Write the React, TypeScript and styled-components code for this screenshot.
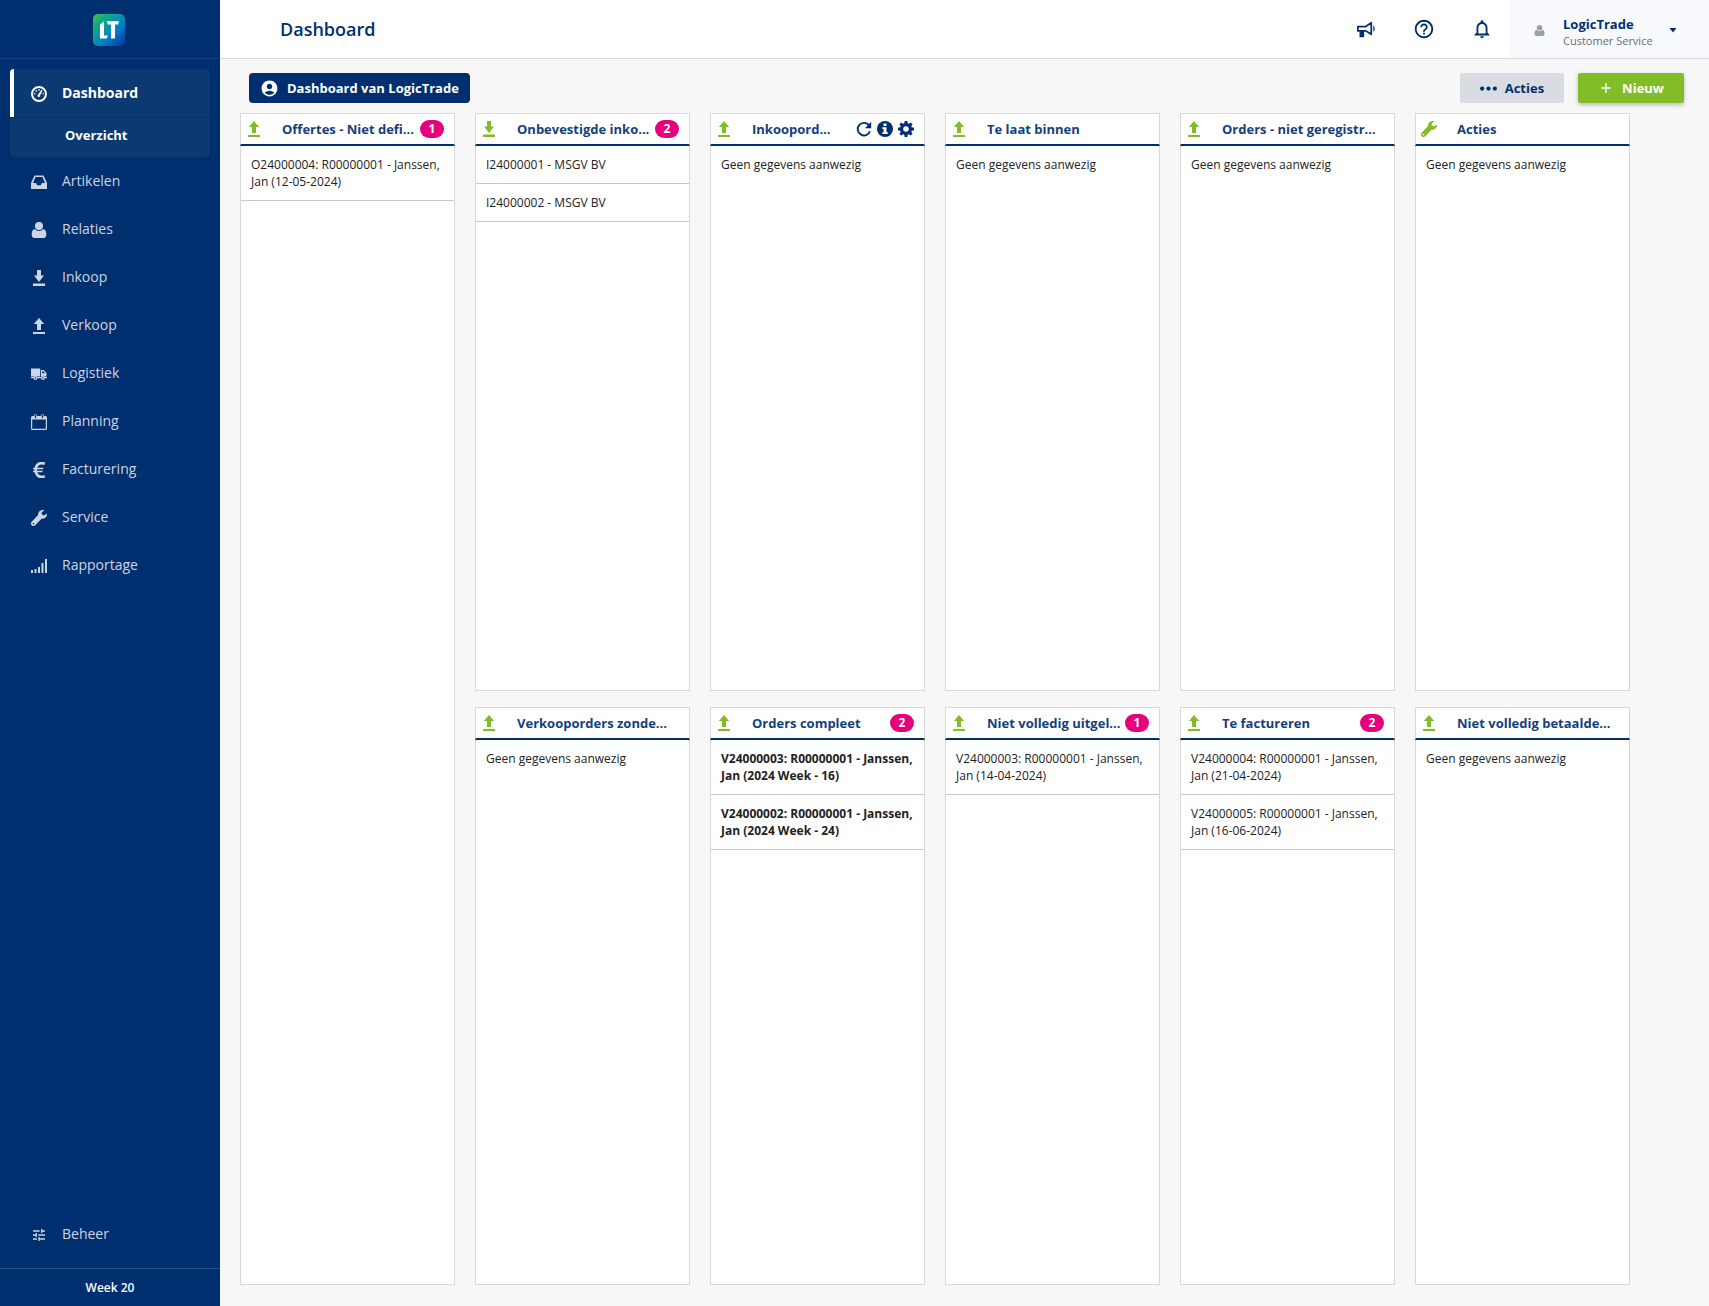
import React from "react";
import styled, { createGlobalStyle } from "styled-components";
import {
  MdAccountCircle,
  MdAdd,
  MdHelpOutline,
  MdNotificationsNone,
  MdTune,
} from "react-icons/md";

const navy = "#002f6f";
const green = "#82bc27";
const pink = "#e6007e";
const line = "#d8d8d8";

const GlobalStyle = createGlobalStyle`
  *, *::before, *::after { box-sizing: border-box; }
  body {
    margin: 0;
    background: #f7f7f7;
    color: #222;
    font-family: "Open Sans", "Noto Sans", sans-serif;
    font-size: 12px;
    line-height: 17px;
  }
  button { font: inherit; border: 0; padding: 0; background: none; cursor: pointer; }
  a { color: inherit; text-decoration: none; }
  ul { list-style: none; margin: 0; padding: 0; }
  h1, h2, p { margin: 0; }
  svg { display: block; flex: none; }
`;

const Shell = styled.div`
  display: flex;
  min-height: 100vh;
`;

const Sidebar = styled.aside`
  flex: none;
  width: 220px;
  display: flex;
  flex-direction: column;
  background: ${navy};
  color: #fff;
`;

const LogoBar = styled.div`
  height: 59px;
  padding: 2px 2px 0 0;
  display: flex;
  align-items: center;
  justify-content: center;
  border-bottom: 1px solid #16417c;
`;

const Nav = styled.nav`
  flex: 1;
  display: flex;
  flex-direction: column;
  justify-content: space-between;
  padding: 10px;
`;

const ActiveGroup = styled.li`
  background: #0b3972;
  border-radius: 4px;
  overflow: hidden;
`;

const NavLink = styled.a<{ $active?: boolean }>`
  display: flex;
  align-items: center;
  gap: 15px;
  height: 48px;
  padding-left: ${(p) => (p.$active ? 17 : 21)}px;
  border-left: ${(p) => (p.$active ? "4px solid #fff" : "0")};
  color: ${(p) => (p.$active ? "#fff" : "#ccd5e2")};
  font-size: 14px;
  font-weight: ${(p) => (p.$active ? 700 : 400)};
  line-height: 20px;

  svg { margin-top: 2px; }
`;

const SubLink = styled.a`
  display: flex;
  align-items: center;
  height: 40px;
  padding: 0 0 4px 55px;
  border-top: 1px solid #052f66;
  font-size: 13px;
  font-weight: 700;
`;

const Week = styled.div`
  height: 38px;
  display: flex;
  align-items: center;
  justify-content: center;
  border-top: 1px solid #264e84;
  font-size: 12px;
  font-weight: 600;
`;

const Main = styled.div`
  flex: 1;
  min-width: 0;
  display: flex;
  flex-direction: column;
`;

const TopBar = styled.header`
  height: 59px;
  display: flex;
  align-items: stretch;
  background: #fff;
  border-bottom: 1px solid ${line};
  color: ${navy};
`;

const PageTitle = styled.h1`
  flex: 1;
  align-self: center;
  padding-left: 60px;
  font-size: 18px;
  font-weight: 600;
  line-height: 24px;
`;

const TopIcons = styled.div`
  display: flex;
  align-items: center;
  gap: 34px;
  padding-right: 15px;

  button { color: ${navy}; width: 24px; height: 24px; display: grid; place-items: center; }
`;

const Profile = styled.button`
  width: 200px;
  display: flex;
  align-items: center;
  padding: 6px 32px 0 25px;
  background: #f8f9fc;
  color: ${navy};
  text-align: left;

  svg { margin-bottom: 4px; }
`;

const ProfileText = styled.span`
  flex: 1;
  display: flex;
  flex-direction: column;
  padding-left: 18px;
`;

const ProfileName = styled.span`
  font-size: 13px;
  font-weight: 700;
`;

const ProfileRole = styled.span`
  font-size: 11px;
  line-height: 16px;
  color: #666c75;
`;

const Toolbar = styled.div`
  display: flex;
  align-items: center;
  gap: 14px;
  padding: 14px 25px 10px 29px;
`;

const Spacer = styled.div`
  flex: 1;
`;

const ToolButton = styled.button<{ $kind: "owner" | "plain" | "new" }>`
  display: flex;
  align-items: center;
  height: 30px;
  gap: 8px;
  padding: ${(p) => (p.$kind === "owner" ? "0 11px" : "0 20px")};
  border-radius: ${(p) => (p.$kind === "owner" ? 4 : 2)}px;
  background: ${(p) => (p.$kind === "owner" ? navy : p.$kind === "new" ? green : "#d9dde3")};
  color: ${(p) => (p.$kind === "plain" ? navy : "#fff")};
  box-shadow: ${(p) => (p.$kind === "new" ? "0 2px 4px rgba(0, 0, 0, 0.25)" : "none")};
  font-size: 13px;
  font-weight: 700;
`;

const Board = styled.main`
  flex: 1;
  display: grid;
  grid-template-columns: repeat(6, minmax(0, 1fr));
  grid-template-rows: 1fr 1fr;
  gap: 16px 20px;
  padding: 0 79px 21px 20px;
`;

const Card = styled.section<{ $tall?: boolean }>`
  grid-row: ${(p) => (p.$tall ? "span 2" : "auto")};
  display: flex;
  flex-direction: column;
`;

const CardHead = styled.header`
  height: 33px;
  display: flex;
  align-items: center;
  padding: 0 10px 0 5px;
  background: #fff;
  border: 1px solid ${line};
  border-bottom: 2px solid ${navy};
`;

const CardTitle = styled.h2`
  flex: 1;
  min-width: 0;
  margin-left: 20px;
  color: #14407c;
  font-size: 13px;
  font-weight: 700;
  white-space: nowrap;
  overflow: hidden;
  text-overflow: ellipsis;
`;

const Badge = styled.span`
  width: 24px;
  height: 18px;
  border-radius: 9px;
  background: ${pink};
  color: #fff;
  font-weight: 700;
  line-height: 18px;
  text-align: center;
`;

const CardTools = styled.div`
  display: flex;
  gap: 5px;

  button { color: ${navy}; }
`;

const CardBody = styled.div`
  flex: 1;
  background: #fff;
  border: 1px solid ${line};
  border-top: 0;
`;

const Item = styled.li<{ $bold?: boolean }>`
  padding: 10px;
  border-bottom: 1px solid #c5cad2;
  font-weight: ${(p) => (p.$bold ? 700 : 400)};
`;

const Empty = styled.p`
  padding: 10px;
`;

type IconName =
  | "gauge" | "inbox" | "user" | "down" | "up" | "truck" | "calendar" | "dots"
  | "euro" | "wrench" | "bars" | "refresh" | "info" | "gear" | "megaphone" | "caret";

const shapes: Record<IconName, React.ReactNode> = {
  gauge: (
    <>
      <circle cx="8" cy="8" r="7" fill="none" stroke="currentColor" strokeWidth="2" />
      <path d="M10.6 3.8 11.5 4.4 9.2 9.2A1.4 1.4 0 1 1 7.3 8.3Z" />
      <circle cx="8" cy="3.9" r=".8" />
      <circle cx="5.2" cy="5.1" r=".8" />
      <circle cx="3.8" cy="7.8" r=".8" />
      <circle cx="12.2" cy="7.8" r=".8" />
    </>
  ),
  inbox: (
    <path
      fillRule="evenodd"
      d="M3.5 1.5h9L16 9v5.5a.5.5 0 0 1-.5.5H.5a.5.5 0 0 1-.5-.5V9Zm1 1.6L2 9h3l1.2 2.2h3.6L11 9h3l-2.500-5.900Z"
    />
  ),
  user: (
    <>
      <circle cx="8" cy="4" r="4" />
      <path d="M3.800 7a5.500 5.500 0 0 0 8.400 0C14.500 7.500 15.300 9.500 15.300 12.500 15.300 14.800 14.300 16 12.500 16h-9C1.700 16 .7 14.800.7 12.500.7 9.500 1.500 7.500 3.800 7Z" />
    </>
  ),
  down: <path d="M6 0h4v5.500H13L8 12 3 5.500h3ZM2 13.500h12V16H2Z" />,
  up: <path d="M8 0 13.200 6H10v6H6V6H2.800ZM2 14h12v2H2Z" />,
  dots: (
    <>
      <circle cx="2" cy="8" r="2" />
      <circle cx="8" cy="8" r="2" />
      <circle cx="14" cy="8" r="2" />
    </>
  ),
  truck: (
    <>
      <path d="M0 2.500h9.200v8H0Z" />
      <path fillRule="evenodd" d="M10 4h2.800L15.500 7v3.500H10Zm1.200 1.200V7.300h2.900L12.300 5.200Z" />
      <path d="M0 11h16v1.200H0Z" />
      <circle cx="4.400" cy="12" r="1.400" fill={navy} stroke="currentColor" strokeWidth="1.200" />
      <circle cx="12" cy="12" r="1.400" fill={navy} stroke="currentColor" strokeWidth="1.200" />
    </>
  ),
  calendar: (
    <>
      <path fillRule="evenodd" d="M1.500 2h13A1.500 1.500 0 0 1 16 3.500v11a1.500 1.500 0 0 1-1.500 1.500h-13A1.500 1.500 0 0 1 0 14.500v-11A1.500 1.500 0 0 1 1.500 2ZM1.200 5.500v9.300h13.600V5.500Z" />
      <rect x="3.400" y=".4" width="2.200" height="4" rx="1.100" fill={navy} stroke="currentColor" strokeWidth=".8" />
      <rect x="10.400" y=".4" width="2.200" height="4" rx="1.100" fill={navy} stroke="currentColor" strokeWidth=".8" />
    </>
  ),
  euro: (
    <>
      <path d="M13.800 1.800C8.500-.4 4.700 2.800 4.700 8s3.800 8.400 9.100 6.200" fill="none" stroke="currentColor" strokeWidth="2.600" />
      <path d="M2 5.800h10.500l-.5 1.500H2Zm0 3h9.800l-.5 1.500H2Z" />
    </>
  ),
  wrench: (
    <path
      fillRule="evenodd"
      d="M15.800 3.400 12.900 5.400 10.800 4.200V2.300L13.400.3C10.500-.6 7 1.200 7 5.100L.7 11.700a2.300 2.300 0 0 0 3.500 3.500L10.500 8.800C14 9.200 16.600 6.500 15.800 3.400ZM2.500 12.800a.8.8 0 1 1 0 1.600.8.800 0 0 1 0-1.600Z"
    />
  ),
  bars: <path d="M0 12h2v3H0Zm3.500-1h2v4h-2ZM7 9h2v6H7Zm3.500-4h2v10h-2ZM14 1h2v14h-2Z" />,
  refresh: (
    <>
      <path d="M14 10.300A6.300 6.300 0 1 1 12.800 4" fill="none" stroke="currentColor" strokeWidth="1.900" />
      <path d="M15.200.8v6.400H8.900Z" />
    </>
  ),
  info: (
    <>
      <circle cx="8" cy="8" r="8" />
      <path fill="#fff" d="M6.500 2.500h3V5h-3ZM5.300 6.200h4.200v5h1.300v1.800H5.300v-1.800h1.300V8H5.300Z" />
    </>
  ),
  gear: (
    <path
      fillRule="evenodd"
      d="M6.700 0h2.600l.4 2.200 1.200.5L12.700 1.400l1.900 1.900-1.300 1.800.5 1.200 2.200.4v2.600l-2.200.4-.5 1.200 1.300 1.800-1.900 1.900-1.800-1.300-1.200.5-.4 2.200H6.700l-.4-2.200-1.200-.5-1.800 1.300-1.900-1.900 1.300-1.800-.5-1.200L0 9.300V6.700l2.200-.4.500-1.200L1.400 3.300 3.300 1.400l1.800 1.300 1.200-.5ZM8 5.200a2.800 2.800 0 1 0 0 5.600 2.800 2.800 0 0 0 0-5.600Z"
    />
  ),
  megaphone: (
    <>
      <path d="M1.500 6h6.300L12.200 3v9.200L7.800 9.500H1.500Z" fill="none" stroke="currentColor" strokeWidth="1.400" strokeLinejoin="round" />
      <path d="M2.800 9.500h3.700v5H2.800ZM13.800 5.200a3.200 3.200 0 0 1 0 5Z" />
    </>
  ),
  caret: <path d="M1 4h14L8 13Z" />,
};

const Icon = ({ name, size = 16, color = "currentColor" }: { name: IconName; size?: number; color?: string }) => (
  <svg width={size} height={size} viewBox="0 0 16 16" fill="currentColor" color={color} aria-hidden="true">
    {shapes[name]}
  </svg>
);

const Logo = () => (
  <svg width="32" height="32" viewBox="0 0 32 32" role="img" aria-label="LogicTrade">
    <defs>
      <linearGradient id="logo" x1="0" y1="0" x2="1" y2="1">
        <stop offset="0" stopColor="#5fb946" />
        <stop offset=".22" stopColor="#12ab7c" />
        <stop offset=".62" stopColor="#0280c8" />
        <stop offset="1" stopColor="#02329c" />
      </linearGradient>
    </defs>
    <rect width="32" height="32" rx="5" fill="url(#logo)" />
    <path fill="#fff" d="M7 10.500 11 7.500V21.500H15L13.500 24.500H7ZM13.500 7.200H26L25.200 10.500H22V24.500H18V10.500H15Z" />
  </svg>
);

const navItems: { label: string; icon: IconName }[] = [
  { label: "Artikelen", icon: "inbox" },
  { label: "Relaties", icon: "user" },
  { label: "Inkoop", icon: "down" },
  { label: "Verkoop", icon: "up" },
  { label: "Logistiek", icon: "truck" },
  { label: "Planning", icon: "calendar" },
  { label: "Facturering", icon: "euro" },
  { label: "Service", icon: "wrench" },
  { label: "Rapportage", icon: "bars" },
];

type CardData = {
  title: string;
  icon: IconName;
  count?: number;
  tools?: boolean;
  tall?: boolean;
  bold?: boolean;
  items?: string[];
};

const cards: CardData[] = [
  { title: "Offertes - Niet defi...", icon: "up", count: 1, tall: true, items: ["O24000004: R00000001 - Janssen, Jan (12-05-2024)"] },
  { title: "Onbevestigde inko...", icon: "down", count: 2, items: ["I24000001 - MSGV BV", "I24000002 - MSGV BV"] },
  { title: "Inkoopord...", icon: "up", tools: true },
  { title: "Te laat binnen", icon: "up" },
  { title: "Orders - niet geregistr...", icon: "up" },
  { title: "Acties", icon: "wrench" },
  { title: "Verkooporders zonde...", icon: "up" },
  {
    title: "Orders compleet",
    icon: "up",
    count: 2,
    bold: true,
    items: ["V24000003: R00000001 - Janssen, Jan (2024 Week - 16)", "V24000002: R00000001 - Janssen, Jan (2024 Week - 24)"],
  },
  { title: "Niet volledig uitgel...", icon: "up", count: 1, items: ["V24000003: R00000001 - Janssen, Jan (14-04-2024)"] },
  {
    title: "Te factureren",
    icon: "up",
    count: 2,
    items: ["V24000004: R00000001 - Janssen, Jan (21-04-2024)", "V24000005: R00000001 - Janssen, Jan (16-06-2024)"],
  },
  { title: "Niet volledig betaalde...", icon: "up" },
];

const DashboardCard = ({ card }: { card: CardData }) => (
  <Card $tall={card.tall}>
    <CardHead>
      <Icon name={card.icon} color={green} />
      <CardTitle>{card.title}</CardTitle>
      {card.count !== undefined && <Badge>{card.count}</Badge>}
      {card.tools && (
        <CardTools>
          <button type="button" aria-label="Vernieuwen"><Icon name="refresh" /></button>
          <button type="button" aria-label="Informatie"><Icon name="info" /></button>
          <button type="button" aria-label="Instellingen"><Icon name="gear" /></button>
        </CardTools>
      )}
    </CardHead>
    <CardBody>
      {card.items ? (
        <ul>
          {card.items.map((text) => (
            <Item key={text} $bold={card.bold}><a href="#item">{text}</a></Item>
          ))}
        </ul>
      ) : (
        <Empty>Geen gegevens aanwezig</Empty>
      )}
    </CardBody>
  </Card>
);

export default function App() {
  return (
    <>
      <GlobalStyle />
      <Shell>
        <Sidebar>
          <LogoBar><Logo /></LogoBar>
          <Nav>
            <ul>
              <ActiveGroup>
                <NavLink href="#dashboard" $active><Icon name="gauge" />Dashboard</NavLink>
                <SubLink href="#overzicht">Overzicht</SubLink>
              </ActiveGroup>
              {navItems.map((n) => (
                <li key={n.label}>
                  <NavLink href={"#" + n.label.toLowerCase()}><Icon name={n.icon} />{n.label}</NavLink>
                </li>
              ))}
            </ul>
            <NavLink href="#beheer"><MdTune size={16} />Beheer</NavLink>
          </Nav>
          <Week>Week 20</Week>
        </Sidebar>
        <Main>
          <TopBar>
            <PageTitle>Dashboard</PageTitle>
            <TopIcons>
              <button type="button" aria-label="Nieuws"><Icon name="megaphone" size={20} /></button>
              <button type="button" aria-label="Help"><MdHelpOutline size={22} /></button>
              <button type="button" aria-label="Meldingen"><MdNotificationsNone size={22} /></button>
            </TopIcons>
            <Profile type="button">
              <Icon name="user" size={11} color="#9aa0a9" />
              <ProfileText>
                <ProfileName>LogicTrade</ProfileName>
                <ProfileRole>Customer Service</ProfileRole>
              </ProfileText>
              <Icon name="caret" size={8} />
            </Profile>
          </TopBar>
          <Toolbar>
            <ToolButton type="button" $kind="owner"><MdAccountCircle size={19} />Dashboard van LogicTrade</ToolButton>
            <Spacer />
            <ToolButton type="button" $kind="plain"><Icon name="dots" size={17} />Acties</ToolButton>
            <ToolButton type="button" $kind="new"><MdAdd size={16} />Nieuw</ToolButton>
          </Toolbar>
          <Board>
            {cards.map((c) => <DashboardCard key={c.title} card={c} />)}
          </Board>
        </Main>
      </Shell>
    </>
  );
}
